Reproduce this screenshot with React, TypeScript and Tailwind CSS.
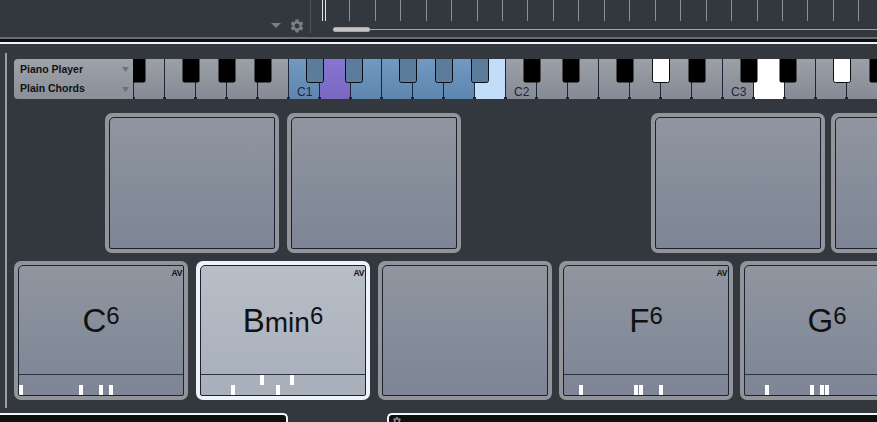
import React from "react";
import { MdSettings } from "react-icons/md";

const KW = 31;

function Keyboard() {
  const whites: { x: number; fill: string }[] = [];
  for (let i = 0; i < 24; i++) {
    const x = i * KW;
    let fill = "url(#wk)";
    if (x >= 155 && x < 372) fill = "url(#bk)";
    if (x === 186) fill = "url(#pk)";
    if (x === 341) fill = "#c2ddfa";
    if (x === 620) fill = "#ffffff";
    whites.push({ x, fill });
  }
  const blacks: { x: number; fill: string; stroke: string }[] = [];
  [-62, 155, 372, 589].forEach((b) => {
    [18, 57, 111, 147, 183].forEach((o) => {
      const x = b + o;
      if (x + 18 <= 0 || x >= 744) return;
      let fill = "#000000";
      let stroke = "none";
      if (b === 155) {
        fill = "#5b7c9b";
        stroke = "#0a0e14";
      }
      if (x === 519 || x === 700) {
        fill = "#ffffff";
        stroke = "#0a0e14";
      }
      blacks.push({ x, fill, stroke });
    });
  });
  const labels = [
    { x: 155, t: "C1" },
    { x: 372, t: "C2" },
    { x: 589, t: "C3" },
  ];
  return (
    <svg width={744} height={40} className="block shrink-0">
      <defs>
        <linearGradient id="wk" x1="0" y1="0" x2="0" y2="1">
          <stop offset="0" stopColor="#9ca0a6" />
          <stop offset="1" stopColor="#858a95" />
        </linearGradient>
        <linearGradient id="bk" x1="0" y1="0" x2="0" y2="1">
          <stop offset="0" stopColor="#7199c1" />
          <stop offset="1" stopColor="#5f86af" />
        </linearGradient>
        <linearGradient id="pk" x1="0" y1="0" x2="0" y2="1">
          <stop offset="0" stopColor="#8676cf" />
          <stop offset="1" stopColor="#7868c2" />
        </linearGradient>
      </defs>
      {whites.map((w) => (
        <rect key={w.x} x={w.x} y={0} width={KW} height={40} fill={w.fill} />
      ))}
      {whites.map((w) => (
        <g key={"l" + w.x}>
          <rect x={w.x} y={0} width={1} height={40} fill="#1d2638" />
          <rect x={w.x - 1} y={38} width={3} height={2} fill="#1d2638" />
        </g>
      ))}
      {labels.map((l) => (
        <text
          key={l.t}
          x={l.x + 9}
          y={37}
          fontSize={12}
          fill="#1b2740"
          fontFamily="'Liberation Sans', Arial, sans-serif"
        >
          {l.t}
        </text>
      ))}
      {blacks.map((b) => (
        <path
          key={b.x}
          d={`M${b.x + 0.5} -1 V${21.5} Q${b.x + 0.5} 23.5 ${b.x + 2.5} 23.5 H${b.x + 15.5} Q${b.x + 17.5} 23.5 ${b.x + 17.5} 21.5 V-1 Z`}
          fill={b.fill}
          stroke={b.stroke}
          strokeWidth={1}
        />
      ))}
    </svg>
  );
}

function Ruler() {
  const ticks: number[] = [];
  for (let k = 0; k < 21; k++) ticks.push(Math.round(38.3 + 25.45 * k));
  return (
    <svg width={566} height={21} className="block">
      <rect x={11} y={0} width={1} height={21} fill="#e2e2e2" />
      <rect x={14} y={0} width={1} height={21} fill="#e2e2e2" />
      {ticks.map((t) => (
        <rect key={t} x={t} y={0} width={1} height={21} fill="#8c9096" />
      ))}
    </svg>
  );
}

function Tri({ w = 7, h = 5, c = "#6e7279" }: { w?: number; h?: number; c?: string }) {
  return (
    <svg width={w} height={h} className="block">
      <polygon points={`0,0 ${w},0 ${w / 2},${h}`} fill={c} />
    </svg>
  );
}

type Bar = { x: number; top?: boolean };

function Pad({
  selected,
  chord,
  av,
  bars,
  tall,
}: {
  selected?: boolean;
  chord?: React.ReactNode;
  av?: boolean;
  bars?: Bar[];
  tall?: boolean;
}) {
  return (
    <div
      className={
        "w-[174px] shrink-0 p-[4px] rounded-[7px] " +
        (tall ? "h-[140px] " : "h-[139px] ") +
        (selected ? "bg-[#eef3fa]" : "bg-[#919499]")
      }
    >
      <div
        className={
          "h-full w-full border border-[#1a2234] rounded-[2px] rounded-tl-[5px] flex flex-col overflow-hidden " +
          (selected
            ? "bg-linear-to-b from-[#b8bec7] to-[#a7afbb]"
            : "bg-linear-to-b from-[#8f969f] to-[#7d8596]")
        }
      >
        {bars && (
          <>
            <div className="flex-1 flex flex-col">
              <div className="h-[10px] flex justify-end pr-[1px] pt-[3px]">
                {av && (
                  <span className="text-[8.5px] leading-none font-bold text-[#111] tracking-[-0.3px]">
                    AV
                  </span>
                )}
              </div>
              <div className="flex-1 flex items-center justify-center pb-[10px] text-[#111] leading-none whitespace-nowrap">
                {chord}
              </div>
            </div>
            <div className="h-px bg-[#2a3244]" />
            <svg width={164} height={20} className="block shrink-0">
              {bars.map((b, i) => (
                <rect
                  key={i}
                  x={b.x}
                  y={b.top ? 0 : 10}
                  width={4}
                  height={10}
                  fill="#ffffff"
                />
              ))}
            </svg>
          </>
        )}
      </div>
    </div>
  );
}

function Chord({ root, q, sup }: { root: string; q?: string; sup: string }) {
  return (
    <span>
      <span className="text-[33px]">{root}</span>
      {q && <span className="text-[28px]">{q}</span>}
      <span className="text-[24px] align-[8px]">{sup}</span>
    </span>
  );
}

export default function App() {
  return (
    <div className="w-[877px] h-[422px] overflow-hidden bg-[#33373e] flex flex-col font-['Liberation_Sans',Arial,sans-serif]">
      {/* top bar */}
      <div className="h-[37px] flex shrink-0">
        <div className="w-[310px] flex justify-end items-start pt-[18px] pr-[5px] gap-[8px]">
          <div className="pt-[5px]">
            <Tri w={10} h={5} c="#7b7f85" />
          </div>
          <MdSettings size={16} color="#7b7f85" />
        </div>
        <div className="w-px h-[33px] bg-[#50545a]" />
        <div className="flex-1 flex flex-col">
          <Ruler />
          <div className="mt-[6px] h-[5px] flex items-center pl-[22px]">
            <div className="w-[37px] h-[5px] rounded-full bg-[#c4c4c4] border-y border-[#a9a9a9]" />
            <div className="flex-1 h-px bg-[#a3a3a3]" />
          </div>
        </div>
      </div>
      <div className="h-[2px] bg-[#696c71] shrink-0" />
      <div className="h-[3px] bg-[#0d0e10] shrink-0" />
      <div className="h-[2px] bg-[#f2f2f2] shrink-0" />

      {/* middle */}
      <div className="h-[369px] flex shrink-0">
        <div className="w-[14px] shrink-0 pl-[5px] pt-[9px]">
          <div className="w-[2px] h-[355px] bg-[#9a9da2]" />
        </div>
        <div className="flex-1 min-w-0 overflow-hidden flex flex-col pt-[15px]">
          <div className="flex h-[40px]">
            <div className="w-[119px] h-[40px] shrink-0 rounded-l-[4px] bg-linear-to-b from-[#9ea2a9] to-[#8a8f98] flex flex-col pl-[6px] pr-[4px] text-[10.5px] font-bold text-[#111]">
              <div className="h-[20px] flex items-center justify-between pt-[1px]">
                <span>Piano Player</span>
                <Tri />
              </div>
              <div className="h-[20px] flex items-center justify-between">
                <span>Plain Chords</span>
                <Tri />
              </div>
            </div>
            <Keyboard />
          </div>

          <div className="flex pl-[91px] mt-[14px]">
            <Pad tall />
            <div className="w-[8px] shrink-0" />
            <Pad tall />
            <div className="w-[190px] shrink-0" />
            <Pad tall />
            <div className="w-[6px] shrink-0" />
            <Pad tall />
          </div>

          <div className="flex mt-[8px]">
            <Pad
              av
              chord={<Chord root="C" sup="6" />}
              bars={[{ x: 0 }, { x: 60 }, { x: 80 }, { x: 90 }]}
            />
            <div className="w-[8px] shrink-0" />
            <Pad
              selected
              av
              chord={<Chord root="B" q="min" sup="6" />}
              bars={[{ x: 30 }, { x: 59, top: true }, { x: 75 }, { x: 89, top: true }]}
            />
            <div className="w-[8px] shrink-0" />
            <Pad />
            <div className="w-[7px] shrink-0" />
            <Pad
              av
              chord={<Chord root="F" sup="6" />}
              bars={[{ x: 15 }, { x: 70 }, { x: 75 }, { x: 95 }]}
            />
            <div className="w-[7px] shrink-0" />
            <Pad
              chord={<Chord root="G" sup="6" />}
              bars={[{ x: 20 }, { x: 65 }, { x: 75 }, { x: 80 }]}
            />
          </div>
        </div>
      </div>

      {/* bottom */}
      <div className="flex flex-1">
        <div className="w-[288px] h-[12px] bg-[#0e0f11] border-t-2 border-r-2 border-[#f4f4f4] rounded-tr-[5px]" />
        <div className="w-[99px]" />
        <div className="flex-1 h-[12px] bg-[#0e0f11] border-t-2 border-l-2 border-[#f4f4f4] rounded-tl-[5px] pl-[3px] pt-[1px]">
          <MdSettings size={10} color="#8a8a8a" />
        </div>
      </div>
    </div>
  );
}
